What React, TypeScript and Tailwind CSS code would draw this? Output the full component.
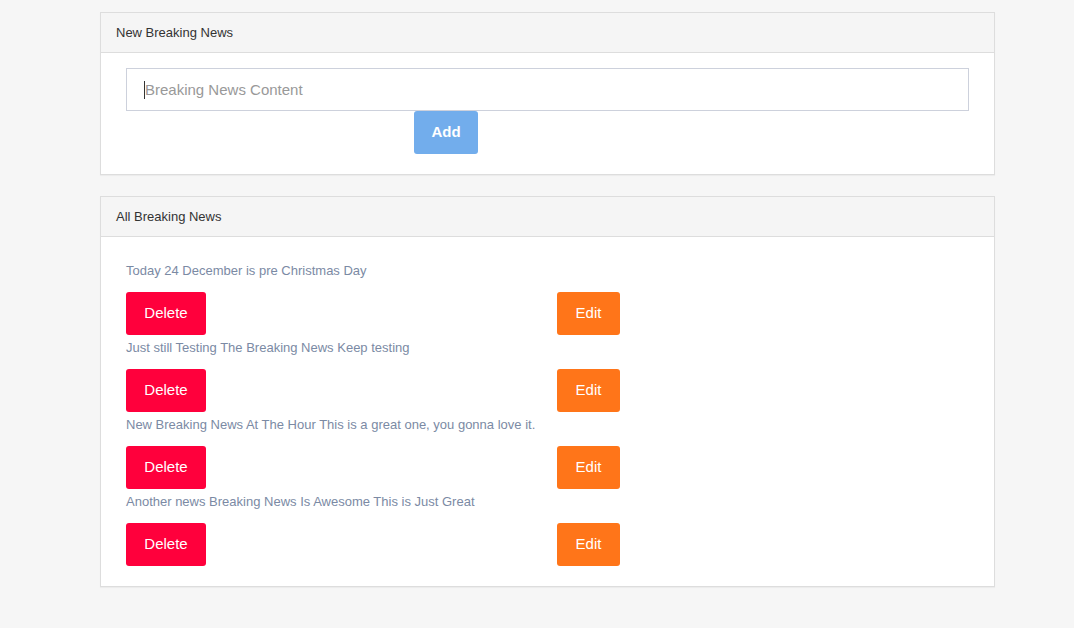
import React, { useState } from 'react';

type News = { id: number; content: string };

const initialNews: News[] = [
  { id: 1, content: 'Today 24 December is pre Christmas Day' },
  { id: 2, content: 'Just still Testing The Breaking News Keep testing' },
  { id: 3, content: 'New Breaking News At The Hour This is a great one, you gonna love it.' },
  { id: 4, content: 'Another news Breaking News Is Awesome This is Just Great' }
];

const Panel = ({ title, children, className }: { title: string; children: React.ReactNode; className?: string }) => (
  <div className={`w-[895px] border border-[#dddddd] bg-white shadow-[0_1px_1px_rgba(0,0,0,0.04)] ${className ?? ''}`}>
    <div className="h-[40px] border-b border-[#dddddd] bg-[#f5f5f5] px-[15px] flex items-center text-[13px] text-[#333333]">
      {title}
    </div>
    {children}
  </div>
);

const App = () => {
  const [news, setNews] = useState<News[]>(initialNews);
  const [content, setContent] = useState('');

  const addNews = () => {
    if (!content.trim()) return;
    setNews([...news, { id: Date.now(), content }]);
    setContent('');
  };

  const deleteNews = (id: number) => {
    setNews(news.filter((n) => n.id !== id));
  };

  return (
    <div className="min-h-[628px] bg-[#f6f6f6] pt-[12px] pb-[40px] pl-[100px] font-['Liberation_Sans',Arial,sans-serif]">
      <Panel title="New Breaking News">
        <div className="px-[25px] pt-[15px] pb-[20px]">
          <div className="relative">
            <input
              className="w-full h-[43px] border border-[#cdd1dc] px-[18px] text-[15px] text-[#555] placeholder:text-[#999999] outline-none"
              placeholder="Breaking News Content"
              value={content}
              onChange={(e) => setContent(e.target.value)}
            />
            {content === '' ? <span className="absolute left-[18px] top-[13px] h-[18px] w-px bg-[#333]" /> : null}
          </div>
          <button
            onClick={addNews}
            className="ml-[288px] h-[43px] w-[64px] rounded-[3px] bg-[#72adec] text-[15px] font-bold text-white"
          >
            Add
          </button>
        </div>
      </Panel>

      <Panel title="All Breaking News" className="mt-[21px]">
        <div className="px-[25px] pt-[24px] pb-[20px] flex flex-col gap-[3px]">
          {news.map((item) => (
            <div key={item.id}>
              <p className="text-[13px] leading-[20px] text-[#7b8aa4] mb-[11px]">{item.content}</p>
              <div className="flex">
                <button
                  onClick={() => deleteNews(item.id)}
                  className="h-[43px] w-[80px] rounded-[3px] bg-[#ff003c] text-[15px] text-white"
                >
                  Delete
                </button>
                <button className="ml-[351px] h-[43px] w-[63px] rounded-[3px] bg-[#ff7519] text-[15px] text-white">
                  Edit
                </button>
              </div>
            </div>
          ))}
        </div>
      </Panel>
    </div>
  );
};

export default App;
